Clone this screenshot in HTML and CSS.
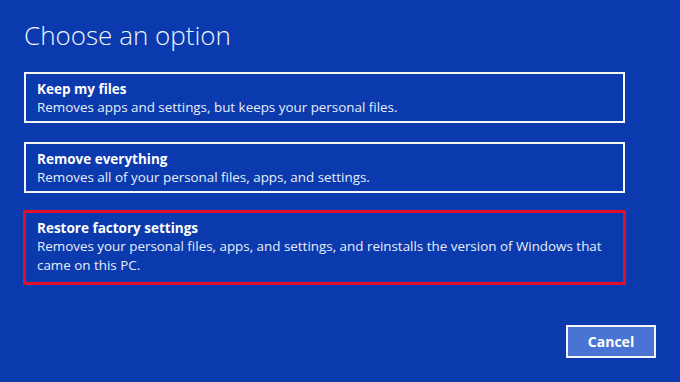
FILE: index.html
```html
<!DOCTYPE html>
<html>
<head>
<meta charset="utf-8">
<link rel="stylesheet" href="styles.css">
</head>
<body>
<div class="screen">
  <h1 class="title">Choose an option</h1>
  <div class="options">
    <div class="option">
      <div class="opt-title">Keep my files</div>
      <div class="opt-desc">Removes apps and settings, but keeps your personal files.</div>
    </div>
    <div class="option">
      <div class="opt-title">Remove everything</div>
      <div class="opt-desc">Removes all of your personal files, apps, and settings.</div>
    </div>
    <div class="option highlighted">
      <div class="opt-title">Restore factory settings</div>
      <div class="opt-desc">Removes your personal files, apps, and settings, and reinstalls the version of Windows that came on this PC.</div>
    </div>
  </div>
  <div class="actions">
    <button class="btn">Cancel</button>
  </div>
</div>
</body>
</html>
```
FILE: styles.css
```css
html, body {
  margin: 0;
  padding: 0;
  width: 680px;
  height: 382px;
  background: #0a3aad;
  overflow: hidden;
}
.screen {
  font-family: "Open Sans", "Noto Sans", sans-serif;
  color: #e8eefa;
  padding: 18px 0 0 24px;
  width: 601px;
}
.title {
  margin: 0;
  font-weight: 300;
  font-size: 26px;
  line-height: 34px;
  color: #f0f4fc;
}
.options {
  margin-top: 20px;
  display: flex;
  flex-direction: column;
  gap: 19px;
}
.option {
  border: 2px solid #f4f6fb;
  padding: 6px 12px 7px 11px;
  box-sizing: border-box;
  height: 51px;
}
.option.highlighted {
  border: 3px solid #e0102a;
  margin: -2px -1px 0 -1px;
  height: 75px;
  padding: 6px 14px 6px 11px;
}
.opt-title {
  font-weight: 700;
  font-size: 13.5px;
  line-height: 18px;
  color: #ffffff;
}
.opt-desc {
  font-size: 13.4px;
  line-height: 19px;
}
.actions {
  display: flex;
  justify-content: flex-end;
  margin-top: 40px;
  margin-right: -31px;
}
.btn {
  width: 90px;
  height: 33px;
  background: #4a74d4;
  border: 2px solid #f4f6fb;
  color: #ffffff;
  font-family: "Open Sans", "Noto Sans", sans-serif;
  font-weight: 700;
  font-size: 14px;
  padding: 0;
}
```
